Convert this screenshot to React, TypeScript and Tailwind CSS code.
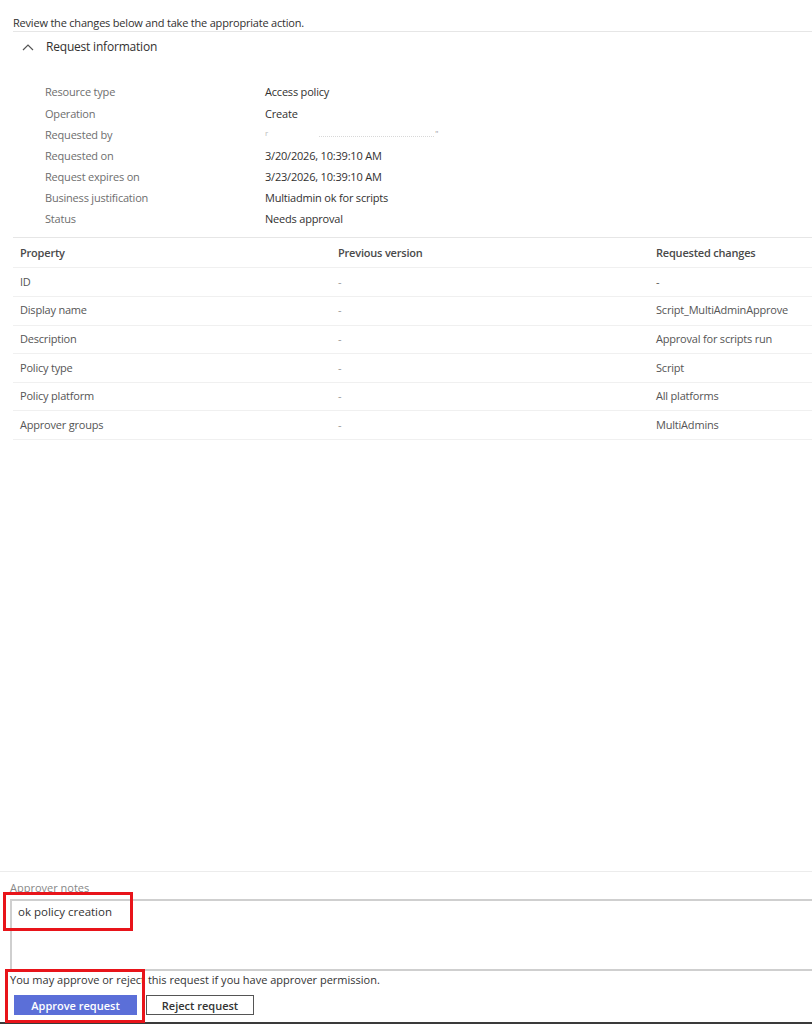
import React from 'react';

const info: [string, string][] = [
  ['Resource type', 'Access policy'],
  ['Operation', 'Create'],
  ['Requested by', ''],
  ['Requested on', '3/20/2026, 10:39:10 AM'],
  ['Request expires on', '3/23/2026, 10:39:10 AM'],
  ['Business justification', 'Multiadmin ok for scripts'],
  ['Status', 'Needs approval'],
];

const rows: [string, string, string][] = [
  ['ID', '-', '-'],
  ['Display name', '-', 'Script_MultiAdminApprove'],
  ['Description', '-', 'Approval for scripts run'],
  ['Policy type', '-', 'Script'],
  ['Policy platform', '-', 'All platforms'],
  ['Approver groups', '-', 'MultiAdmins'],
];

export default function App() {
  return (
    <div className="relative w-[812px] h-[1024px] overflow-hidden bg-white flex flex-col font-['Open_Sans',sans-serif] text-[11px] text-[#323130]">
      {/* top */}
      <div className="ml-[13px] h-[32px] pt-[15px] border-b border-[#e6e6e6] leading-[15px] tracking-[-0.2px]">
        Review the changes below and take the appropriate action.
      </div>

      <div className="flex items-center h-[30px] pl-[22px] gap-[12px] text-[12px]">
        <svg width="12" height="8" viewBox="0 0 12 8" fill="none" stroke="#555" strokeWidth="1.2">
          <path d="M1 7 L6 2 L11 7" />
        </svg>
        <span className="tracking-[-0.2px]">Request information</span>
      </div>

      <div className="pt-[20px] pb-[7px] ml-[13px] border-b border-[#e6e6e6]">
        {info.map(([k, v]) => (
          <div key={k} className="flex h-[21.2px] items-center">
            <div className="w-[252px] pl-[32px] text-[#6e6e6e] tracking-[-0.2px]">{k}</div>
            {k === 'Requested by' ? (
              <div className="flex items-center gap-[1px] text-[#bbb]">
                <span className="text-[8px] -mt-[4px]">r</span>
                <span className="ml-[50px] w-[115px] border-b border-dotted border-[#d8d8d8] mt-[3px]" />
                <span className="text-[7px] text-[#888] -mt-[2px]">''</span>
              </div>
            ) : (
              <div className="tracking-[-0.2px]">{v}</div>
            )}
          </div>
        ))}
      </div>

      <div className="ml-[13px]">
        <div className="grid grid-cols-[318px_318px_1fr] h-[30px] items-center pl-[7px] border-b border-[#f0f0f0] font-semibold text-[#4a4a4a] tracking-[-0.2px]">
          <div>Property</div>
          <div>Previous version</div>
          <div>Requested changes</div>
        </div>
        {rows.map(([a, b, c]) => (
          <div
            key={a}
            className="grid grid-cols-[318px_318px_1fr] h-[28.6px] items-center pl-[7px] border-b border-[#f0f0f0] text-[#555] tracking-[-0.2px]"
          >
            <div>{a}</div>
            <div className="text-[#999]">{b}</div>
            <div>{c}</div>
          </div>
        ))}
      </div>

      <div className="flex-1" />

      {/* approver section */}
      <div className="border-t border-[#ececec] pt-[10px]">
        <div className="ml-[10px] h-[17px] leading-[12px] text-[#888]">Approver notes</div>
        <div className="ml-[10px] mr-[-10px] h-[72px] border-2 border-[#cfcfcf] pl-[6px] pt-[2px] text-[11.5px] text-[#333]">
          ok policy creation
        </div>
        <div className="ml-[10px] mt-[2px] leading-[14px] text-[#333]">
          You may approve or reject this request if you have approver permission.
        </div>
        <div className="flex gap-[9px] ml-[14px] mt-[8px]">
          <button className="w-[123px] h-[20px] bg-[#5b6fd8] text-white font-semibold leading-none">
            Approve request
          </button>
          <button className="w-[108px] h-[20px] border border-[#555] bg-white text-[#333] font-semibold leading-none">
            Reject request
          </button>
        </div>
        <div className="h-[7px]" />
        <div className="h-[2px] bg-[#3a3a3a]" />
      </div>

      {/* annotation boxes */}
      <div className="absolute left-[3px] top-[892px] w-[130px] h-[39px] border-[3px] border-[#e8141a]" />
      <div className="absolute left-[5px] top-[969px] w-[140px] h-[54px] border-[3px] border-[#e8141a]" />
    </div>
  );
}
